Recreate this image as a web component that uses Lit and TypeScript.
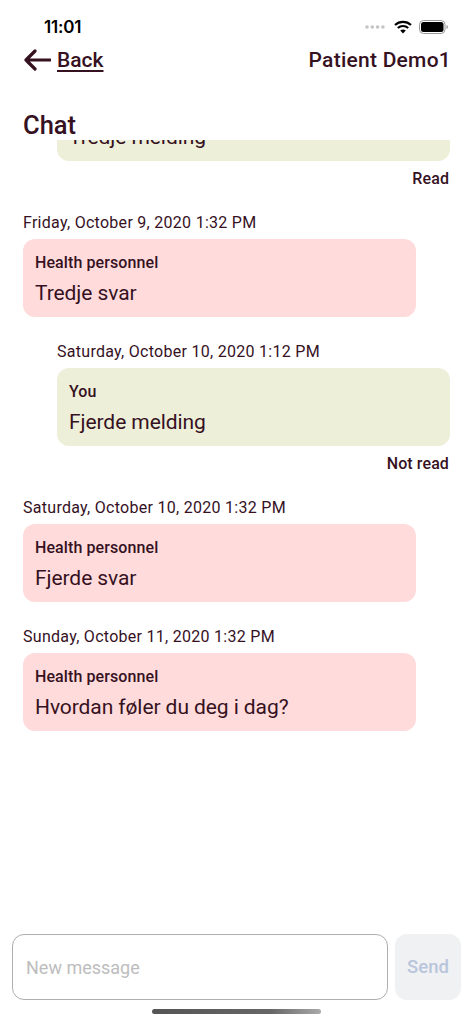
import { LitElement, html, css } from "lit";
import { customElement } from "lit/decorators.js";

type Msg = { date?: string; me: boolean; text: string; status?: string };

const MESSAGES: Msg[] = [
  { me: true, text: "Tredje melding", status: "Read" },
  { date: "Friday, October 9, 2020 1:32 PM", me: false, text: "Tredje svar" },
  { date: "Saturday, October 10, 2020 1:12 PM", me: true, text: "Fjerde melding", status: "Not read" },
  { date: "Saturday, October 10, 2020 1:32 PM", me: false, text: "Fjerde svar" },
  { date: "Sunday, October 11, 2020 1:32 PM", me: false, text: "Hvordan føler du deg i dag?" },
];

@customElement("app-root")
export class AppRoot extends LitElement {
  static styles = css`
    :host {
      display: block;
      width: 473px;
      height: 1024px;
      background: #fff;
      color: #36111f;
      font-family: "Roboto", "Noto Sans", sans-serif;
      overflow: hidden;
    }
    .page { height: 1024px; display: flex; flex-direction: column; position: relative; }
    .status {
      height: 44px; flex: none; display: flex; align-items: center; justify-content: space-between;
      padding: 10px 24px 0 44px; box-sizing: border-box; color: #000;
    }
    .time { font-size: 17px; font-weight: 600; letter-spacing: -0.2px; font-family: "Inter", sans-serif; }
    .indicators { display: flex; align-items: center; gap: 7px; }
    .header {
      height: 32px; flex: none; display: flex; align-items: center; justify-content: space-between;
      padding: 0 22px 0 23px;
    }
    .back { display: flex; align-items: center; gap: 6px; font-size: 21px; font-weight: 500; text-decoration: underline; text-underline-offset: 3px; }
    .patient { font-size: 21px; font-weight: 500; letter-spacing: 0.25px; }
    .title { flex: none; margin: 32px 0 0 23px; height: 32px; line-height: 34px; font-size: 25.5px; font-weight: 500; }
    .scroll { flex: 1; min-height: 0; overflow: hidden; }
    .list { margin-top: -57.5px; display: flex; flex-direction: column; padding: 0 23px; }
    .item { display: flex; flex-direction: column; margin-bottom: 25px; }
    .item.has-state { margin-bottom: 25.3px; }
    .item.me { padding-left: 34px; }
    .item.them { padding-right: 34px; }
    .date { font-size: 16px; line-height: 20px; margin: 0 0 6px; letter-spacing: 0.28px; }
    .bubble { height: 78px; box-sizing: border-box; border-radius: 12px; padding: 14px 12px 0; }
    .me .bubble { background: #edefd9; }
    .them .bubble { background: #ffdcdb; }
    .who { font-size: 16px; line-height: 19px; font-weight: 500; letter-spacing: 0.1px; }
    .text { font-size: 21px; line-height: 28px; margin-top: 7px; letter-spacing: -0.08px; }
    .state { font-size: 16px; line-height: 19px; font-weight: 500; text-align: right; margin-top: 8px; padding-right: 1px; letter-spacing: 0.1px; }
    .composer { flex: none; display: flex; gap: 7px; padding: 0 12px; height: 66px; margin-bottom: 24px; }
    .input {
      flex: 1; box-sizing: border-box; border: 1.5px solid #b0aeb0; border-radius: 12px;
      display: flex; align-items: center; padding-left: 13px; font-size: 18px; color: #bdbdbd;
    }
    .send {
      width: 66px; border-radius: 12px; background: #f0f1f3; display: flex; align-items: center; justify-content: center;
      color: #b9c5dc; font-size: 18.5px; font-weight: 500;
    }
    .home {
      position: absolute; left: 152px; top: 1009px; width: 169px; height: 5px; border-radius: 3px;
      background: linear-gradient(90deg, #555 0%, #666 70%, #aaa 100%);
    }
  `;

  render() {
    return html`
      <div class="page">
        <div class="status">
          <span class="time">11:01</span>
          <span class="indicators">
            <svg width="22" height="8" viewBox="0 0 22 8"><g fill="#c4c4c4"><circle cx="2" cy="4" r="1.8"/><circle cx="7.300" cy="4" r="1.8"/><circle cx="12.6" cy="4" r="1.8"/><circle cx="17.9" cy="4" r="1.8"/></g></svg>
            <svg width="18" height="14" viewBox="0 0 18 14"><path d="M1 5C5.500 .8 12.500 .8 17 5M3.800 8C6.700 5.300 11.300 5.300 14.200 8" fill="none" stroke="#000" stroke-width="2.2"/><path d="M6.200 10.500C7.800 9 10.200 9 11.800 10.500L9 13.600Z" fill="#000"/></svg>
            <svg width="30" height="14" viewBox="0 0 30 14"><rect x=".5" y=".5" width="25.500" height="13" rx="4" fill="none" stroke="#999"/><rect x="2" y="2" width="22.500" height="10" rx="2.500" fill="#000"/><path d="M27.500 5v4c.9-.3 1.400-1.100 1.400-2s-.5-1.700-1.400-2z" fill="#999"/></svg>
          </span>
        </div>
        <div class="header">
          <span class="back">
            <svg width="28" height="24" viewBox="0 0 28 24"><path d="M27 12H3M12 3l-9 9 9 9" fill="none" stroke="#36111f" stroke-width="3.2" stroke-linecap="round" stroke-linejoin="round"/></svg>
            <span>Back</span>
          </span>
          <span class="patient">Patient Demo1</span>
        </div>
        <div class="title">Chat</div>
        <div class="scroll">
          <div class="list">
            ${MESSAGES.map(
              (m) => html`
                <div class="item ${m.me ? "me" : "them"} ${m.status ? "has-state" : ""}">
                  ${m.date ? html`<div class="date">${m.date}</div>` : ""}
                  <div class="bubble">
                    <div class="who">${m.me ? "You" : "Health personnel"}</div>
                    <div class="text">${m.text}</div>
                  </div>
                  ${m.status ? html`<div class="state">${m.status}</div>` : ""}
                </div>
              `
            )}
          </div>
        </div>
        <div class="composer">
          <div class="input">New message</div>
          <div class="send">Send</div>
        </div>
        <div class="home"></div>
      </div>
    `;
  }
}
